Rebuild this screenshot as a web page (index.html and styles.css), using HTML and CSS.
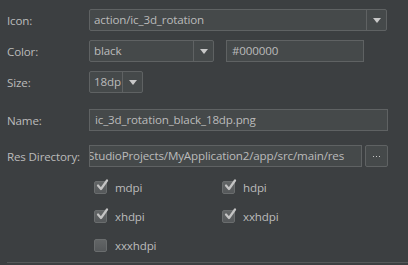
FILE: index.html
```html
<!DOCTYPE html>
<html>
<head>
<meta charset="utf-8">
<link rel="stylesheet" href="styles.css">
</head>
<body>
<div class="panel">
  <div class="row r-icon">
    <div class="label">Icon:</div>
    <div class="combo w-icon">
      <div class="combo-text">action/ic_3d_rotation</div>
      <div class="arrow"><span class="tri"></span></div>
    </div>
  </div>
  <div class="row r-color">
    <div class="label">Color:</div>
    <div class="combo w-color">
      <div class="combo-text">black</div>
      <div class="arrow"><span class="tri"></span></div>
    </div>
    <div class="field w-hex">#000000</div>
  </div>
  <div class="row r-size">
    <div class="label">Size:</div>
    <div class="combo w-size">
      <div class="combo-text">18dp</div>
      <div class="arrow"><span class="tri"></span></div>
    </div>
  </div>
  <div class="row r-name">
    <div class="label">Name:</div>
    <div class="field w-name">ic_3d_rotation_black_18dp.png</div>
  </div>
  <div class="row r-res">
    <div class="label">Res Directory:</div>
    <div class="field w-res"><span class="res-text">StudioProjects/MyApplication2/app/src/main/res</span></div>
    <div class="btn"><span class="dot"></span><span class="dot"></span><span class="dot"></span></div>
  </div>
  <div class="checks">
    <label class="cb"><span class="box on"><svg viewBox="0 0 14 14" width="14" height="14"><path d="M3 6.5 L6 10 L12 1.5" fill="none" stroke="#c4c4c4" stroke-width="2.2" stroke-linecap="round" stroke-linejoin="round"/></svg></span>mdpi</label>
    <label class="cb"><span class="box on"><svg viewBox="0 0 14 14" width="14" height="14"><path d="M3 6.5 L6 10 L12 1.5" fill="none" stroke="#c4c4c4" stroke-width="2.2" stroke-linecap="round" stroke-linejoin="round"/></svg></span>hdpi</label>
    <label class="cb"><span class="box on"><svg viewBox="0 0 14 14" width="14" height="14"><path d="M3 6.5 L6 10 L12 1.5" fill="none" stroke="#c4c4c4" stroke-width="2.2" stroke-linecap="round" stroke-linejoin="round"/></svg></span>xhdpi</label>
    <label class="cb"><span class="box on"><svg viewBox="0 0 14 14" width="14" height="14"><path d="M3 6.5 L6 10 L12 1.5" fill="none" stroke="#c4c4c4" stroke-width="2.2" stroke-linecap="round" stroke-linejoin="round"/></svg></span>xxhdpi</label>
    <label class="cb"><span class="box"></span>xxxhdpi</label>
  </div>
  <div class="sep"></div>
</div>
</body>
</html>
```
FILE: styles.css
```css
html, body {
  margin: 0;
  padding: 0;
  background: #3c3f41;
}
body {
  width: 408px;
  height: 265px;
  overflow: hidden;
  font-family: "Open Sans", "DejaVu Sans", sans-serif;
  font-size: 11.6px;
  letter-spacing: -0.15px;
  color: #bbbbbb;
}
.panel {
  padding: 9px 0 0 7px;
  display: flex;
  flex-direction: column;
}
.row {
  display: flex;
  align-items: center;
  height: 22px;
}
.label {
  width: 82px;
  flex: none;
  padding-top: 1px;
}
.r-color { margin-top: 9px; }
.r-size { margin-top: 9px; }
.r-name { margin-top: 16px; }
.r-res { margin-top: 14px; }
.combo, .field, .btn {
  box-sizing: border-box;
  height: 22px;
  border: 1px solid #5f6263;
  border-radius: 2px;
  background: #45494a;
}
.combo {
  display: flex;
}
.combo-text {
  flex: 1;
  padding-left: 4px;
  line-height: 20px;
  white-space: nowrap;
  overflow: hidden;
}
.arrow {
  width: 19px;
  border-left: 1px solid #5f6263;
  display: flex;
  align-items: center;
  justify-content: center;
}
.tri {
  width: 0;
  height: 0;
  border-left: 4px solid transparent;
  border-right: 4px solid transparent;
  border-top: 5px solid #c8c8c8;
}
.w-icon { width: 298px; }
.w-color { width: 125px; }
.w-size { width: 54px; }
.field {
  padding-left: 5px;
  line-height: 20px;
  white-space: nowrap;
  overflow: hidden;
  border-radius: 0;
}
.w-hex { width: 138px; margin-left: 12px; }
.w-name { width: 299px; }
.w-res {
  width: 273px;
  padding-left: 0;
}
.res-text {
  display: inline-block;
  margin-left: -2px;
}
.btn {
  width: 23px;
  margin-left: 3px;
  display: flex;
  align-items: center;
  justify-content: center;
  gap: 2px;
}
.dot {
  width: 1px;
  height: 1px;
  background: #c8c8c8;
}
.checks {
  display: grid;
  grid-template-columns: 128px 120px;
  row-gap: 13px;
  margin: 12px 0 0 87px;
}
.cb {
  display: flex;
  align-items: center;
  height: 16px;
}
.box {
  position: relative;
  width: 13px;
  height: 13px;
  box-sizing: border-box;
  border: 1px solid #6a6d6e;
  border-radius: 2px;
  background: linear-gradient(#626566, #55585a);
  margin-right: 8px;
  flex: none;
}
.box svg {
  position: absolute;
  left: 0;
  top: -3px;
}
.sep {
  margin-top: 9px;
  height: 1px;
  background: #555859;
}
```
